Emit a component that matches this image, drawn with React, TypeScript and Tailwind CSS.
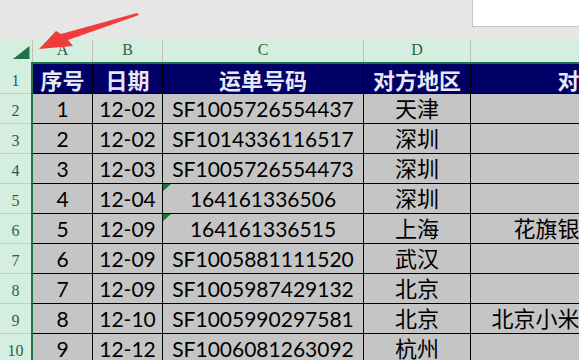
const cols = [
  { key: "A", w: "w-[60px]" },
  { key: "B", w: "w-[70px]" },
  { key: "C", w: "w-[201px]" },
  { key: "D", w: "w-[107px]" },
  { key: "E", w: "w-[262px]" },
];

const heads = ["序号", "日期", "运单号码", "对方地区", "对方单位"];

// 序号, 日期, 运单号码, 地区, 单位, 绿三角(文本数字)
const rows: [string, string, string, string, string, boolean][] = [
  ["1", "12-02", "SF1005726554437", "天津", "", false],
  ["2", "12-02", "SF1014336116517", "深圳", "", false],
  ["3", "12-03", "SF1005726554473", "深圳", "", false],
  ["4", "12-04", "164161336506", "深圳", "", true],
  ["5", "12-09", "164161336515", "上海", "花旗银行上海分行", true],
  ["6", "12-09", "SF1005881111520", "武汉", "", false],
  ["7", "12-09", "SF1005987429132", "北京", "", false],
  ["8", "12-10", "SF1005990297581", "北京", "北京小米科技有限公司", false],
  ["9", "12-12", "SF1006081263092", "杭州", "", false],
  ["10", "12-12", "SF1006081263111", "杭州", "", false],
];

function Cell({
  w,
  children,
  num = true,
  flag = false,
}: {
  w: string;
  children?: React.ReactNode;
  num?: boolean;
  flag?: boolean;
}) {
  return (
    <div
      className={`relative flex shrink-0 items-center justify-center whitespace-nowrap border-r border-black ${w} ${
        num ? "text-[21px]" : "text-[22px]"
      }`}
    >
      {flag && (
        <svg className="absolute left-0 top-0" width="8" height="7" viewBox="0 0 8 7">
          <polygon points="0,0 8,0 0,7" fill="#117a2e" />
        </svg>
      )}
      <span className="leading-none">{children}</span>
    </div>
  );
}

export default function App() {
  return (
    <div className="relative h-[360px] w-[579px] overflow-hidden bg-[#e6e6e6]">
      {/* 顶部空白 + 名称框 */}
      <div className="flex h-[40px] justify-end">
        <div className="h-[27px] w-[107px] border-b border-l border-[#c6c6c6] bg-white" />
      </div>

      {/* 列标 */}
      <div className="flex h-[22px] bg-[#d4efdf] font-[family-name:'Liberation_Serif',serif] text-[16px] text-[#2d5f4a]">
        <div className="w-[33px] shrink-0 border-r border-[#bdbdbd]">
          <svg width="32" height="22" viewBox="0 0 32 22">
            <polygon points="13,19 29.5,19 29.5,6" fill="#217346" />
          </svg>
        </div>
        {cols.map((c) => (
          <div
            key={c.key}
            className={`flex shrink-0 items-end justify-center border-r border-[#bdbdbd] pb-[4px] leading-none ${c.w}`}
          >
            {c.key}
          </div>
        ))}
      </div>

      <div className="flex">
        {/* 行号 */}
        <div className="flex w-[31px] shrink-0 flex-col bg-[#d4efdf] font-[family-name:'Liberation_Serif',serif] text-[16px] leading-none text-[#2d5f4a]">
          {rows.map((_, i) => (
            <div
              key={i}
              className={`flex shrink-0 items-end justify-center border-b border-[#bfcdc3] pb-[4px] ${
                i === 0 ? "h-[32px]" : "h-[30px]"
              }`}
            >
              {i + 1}
            </div>
          ))}
        </div>

        {/* 表格 */}
        <div className="flex flex-col border-l-2 border-t-2 border-[#217346]">
          <div className="flex h-[30px] shrink-0 border-b border-black bg-[#000066] font-[family-name:'Noto_Sans_CJK_SC',sans-serif] text-[22px] font-bold text-[#e8e8f2]">
            {heads.map((h, i) => (
              <div
                key={h}
                className={`flex shrink-0 items-center justify-center whitespace-nowrap border-r border-black leading-none ${cols[i].w}`}
              >
                {h}
              </div>
            ))}
          </div>
          {rows.slice(0, 9).map((r) => (
            <div
              key={r[0]}
              className="flex h-[30px] shrink-0 border-b border-black bg-[#c5c5c5] font-[family-name:Lato,'Noto_Sans_CJK_SC',sans-serif] text-black"
            >
              <Cell w={cols[0].w}>{r[0]}</Cell>
              <Cell w={cols[1].w}>{r[1]}</Cell>
              <Cell w={cols[2].w} flag={r[5]}>
                {r[2]}
              </Cell>
              <Cell w={cols[3].w} num={false}>
                {r[3]}
              </Cell>
              <Cell w={cols[4].w} num={false}>
                {r[4]}
              </Cell>
            </div>
          ))}
        </div>
      </div>

      {/* 红色箭头 */}
      <svg className="pointer-events-none absolute left-0 top-0" width="579" height="360">
        <polygon
          points="39,49 56,31 61,34 137,13 139,15 68,40 73,46"
          fill="#f23c3c"
        />
      </svg>
    </div>
  );
}
